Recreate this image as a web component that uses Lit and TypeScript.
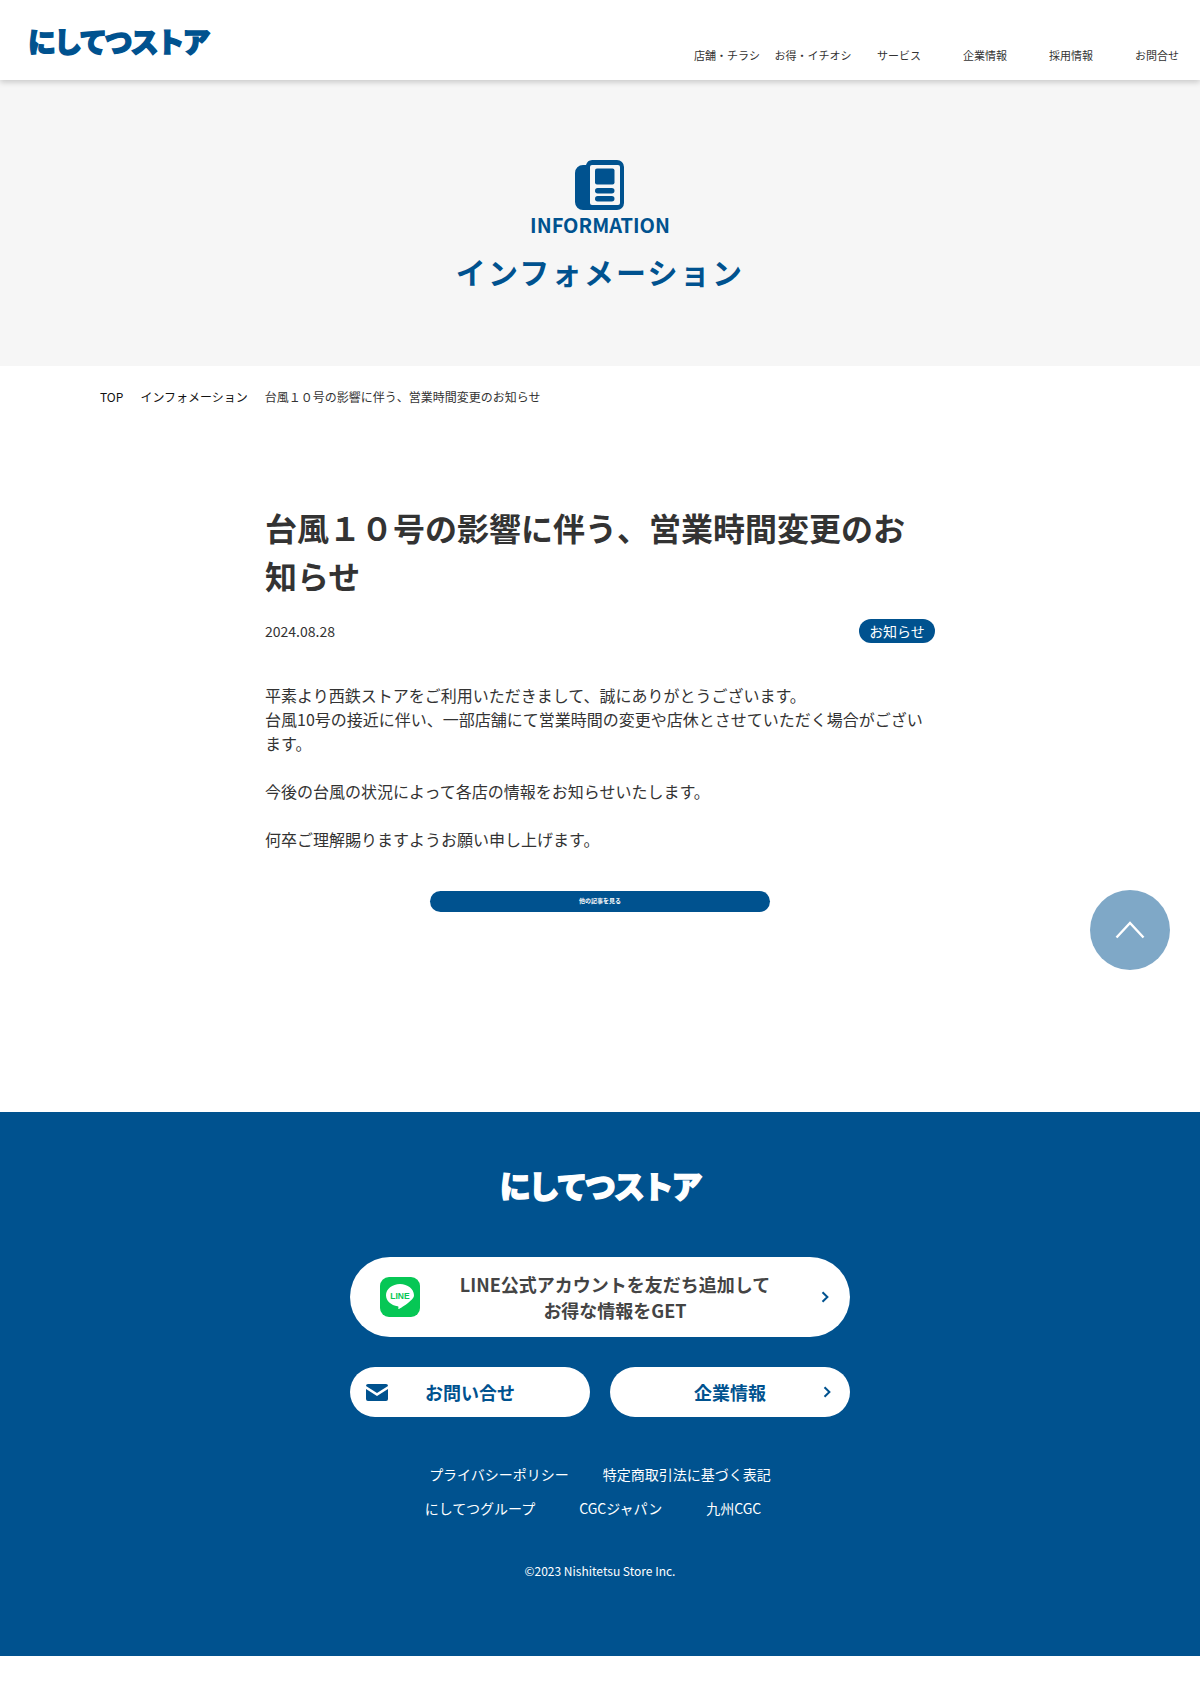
import { LitElement, css, html } from 'lit';
import { customElement } from 'lit/decorators.js';

const NAV = ['店舗・チラシ', 'お得・イチオシ', 'サービス', '企業情報', '採用情報', 'お問合せ'];

const chevron = html`<svg class="chev" width="8" height="12" viewBox="0 0 8 12">
  <path d="M1.5 1.2 6.4 6 1.5 10.8" fill="none" stroke="currentColor" stroke-width="2" />
</svg>`;

@customElement('app-root')
export class AppRoot extends LitElement {
  static styles = css`
    :host {
      display: block;
      position: relative;
      height: 1703px;
      background: #fff;
      color: #333;
      font-family: 'Noto Sans CJK JP', 'Noto Sans', sans-serif;
    }
    a {
      color: inherit;
      text-decoration: none;
    }
    .header {
      position: relative;
      z-index: 1;
      display: flex;
      justify-content: space-between;
      height: 80px;
      padding: 0 0 0 28px;
      background: #fff;
      box-shadow: 0 2px 6px rgba(0, 0, 0, 0.2);
    }
    .logo {
      display: block;
      font-weight: 900;
      white-space: nowrap;
      color: #00528f;
      -webkit-text-stroke: 1.4px currentColor;
    }
    .header .logo {
      font-size: 28px;
      line-height: 28px;
      letter-spacing: -2px;
      margin-top: 27px;
    }
    .nav {
      display: flex;
      align-items: flex-end;
      height: 64px;
    }
    .nav a {
      width: 86px;
      text-align: center;
      font-size: 11px;
      line-height: 18px;
    }
    .hero {
      height: 286px;
      box-sizing: border-box;
      padding-top: 80px;
      background: #f6f6f6;
      color: #00528f;
      text-align: center;
    }
    .hero svg {
      display: block;
      margin: 0 auto;
    }
    .hero-en {
      margin-top: 2px;
      font-size: 20px;
      line-height: 26px;
      font-weight: 700;
    }
    .hero h1 {
      margin: 13px 0 0;
      font-size: 30px;
      line-height: 40px;
      font-weight: 700;
      letter-spacing: 2.2px;
    }
    .crumbs {
      display: flex;
      gap: 17px;
      padding: 22px 0 0 100px;
      font-size: 12px;
      line-height: 18px;
    }
    .crumbs a {
      color: #111;
    }
    .article {
      width: 670px;
      margin: 97px auto 0;
    }
    .article h2 {
      margin: 0;
      font-size: 32px;
      line-height: 48px;
      font-weight: 700;
    }
    .meta {
      display: flex;
      justify-content: space-between;
      align-items: center;
      margin-top: 20px;
      font-size: 14px;
    }
    .tag {
      width: 76px;
      height: 24px;
      border-radius: 12px;
      background: #00528f;
      color: #fff;
      text-align: center;
      line-height: 24px;
    }
    .body {
      margin: 40px 0 0;
      font-size: 16px;
      line-height: 24px;
    }
    .more {
      display: block;
      width: 340px;
      height: 21px;
      margin: 40px auto 0;
      border-radius: 11px;
      background: #00528f;
      color: #fff;
      text-align: center;
      font-size: 6px;
      font-weight: 700;
      line-height: 19px;
    }
    .totop {
      position: absolute;
      left: 1090px;
      top: 890px;
      width: 80px;
      height: 80px;
      border-radius: 50%;
      background: rgba(0, 82, 143, 0.5);
      display: flex;
      align-items: center;
      justify-content: center;
    }
    .footer {
      height: 544px;
      box-sizing: border-box;
      margin-top: 200px;
      padding-top: 58px;
      background: #00528f;
      color: #fff;
      text-align: center;
    }
    .footer .logo {
      color: #fff;
      font-size: 31px;
      line-height: 30px;
      letter-spacing: -2.1px;
    }
    .line {
      display: flex;
      align-items: center;
      width: 500px;
      height: 80px;
      box-sizing: border-box;
      margin: 57px auto 0;
      padding: 0 21px 0 30px;
      border-radius: 40px;
      background: #fff;
      color: #00528f;
    }
    .line-icon text {
      font-family: 'Liberation Sans', sans-serif;
      font-size: 8.5px;
      font-weight: 700;
      fill: #06c755;
    }
    .line-text {
      flex: 1;
      padding-right: 11px;
      color: #444;
      font-size: 18px;
      line-height: 26px;
      font-weight: 600;
    }
    .btns {
      display: flex;
      justify-content: center;
      gap: 20px;
      margin-top: 30px;
    }
    .btn {
      display: grid;
      grid-template-columns: 1fr auto 1fr;
      align-items: center;
      width: 240px;
      height: 50px;
      box-sizing: border-box;
      padding: 0 16px;
      border-radius: 25px;
      background: #fff;
      color: #00528f;
      font-size: 18px;
      font-weight: 700;
    }
    .btn .chev {
      justify-self: end;
      margin-right: 3px;
    }
    .links {
      display: flex;
      justify-content: center;
      font-size: 14px;
      line-height: 24px;
    }
    .links.one {
      gap: 34px;
      margin-top: 45px;
    }
    .links.two {
      gap: 44px;
      margin-top: 10px;
      padding-right: 14px;
    }
    .copy {
      margin-top: 42px;
      font-size: 12px;
      line-height: 18px;
    }
  `;

  render() {
    return html`
      <header class="header">
        <a class="logo">にしてつストア</a>
        <nav class="nav">${NAV.map((n) => html`<a>${n}</a>`)}</nav>
      </header>

      <section class="hero">
        <svg width="50" height="50" viewBox="0 0 50 50">
          <path
            fill="#00528f"
            d="M18 0H42a7 7 0 0 1 7 7V43a7 7 0 0 1-7 7H8a8 8 0 0 1-8-8V13a8 8 0 0 1 8-8h3a7 7 0 0 1 7-5Z"
          />
          <rect x="15" y="5" width="30" height="40" rx="2" fill="#f6f6f6" />
          <rect x="20" y="8.5" width="19.5" height="16" rx="2" fill="#00528f" />
          <rect x="20" y="28" width="19.5" height="5.5" rx="2.7" fill="#00528f" />
          <rect x="20" y="36" width="19.5" height="5.5" rx="2.7" fill="#00528f" />
        </svg>
        <div class="hero-en">INFORMATION</div>
        <h1>インフォメーション</h1>
      </section>

      <div class="crumbs">
        <a>TOP</a>
        <a>インフォメーション</a>
        <span>台風１０号の影響に伴う、営業時間変更のお知らせ</span>
      </div>

      <article class="article">
        <h2>台風１０号の影響に伴う、営業時間変更のお知らせ</h2>
        <div class="meta">
          <span>2024.08.28</span>
          <span class="tag">お知らせ</span>
        </div>
        <p class="body">
          平素より西鉄ストアをご利用いただきまして、誠にありがとうございます。<br />
          台風10号の接近に伴い、一部店舗にて営業時間の変更や店休とさせていただく場合がございます。<br />
          <br />
          今後の台風の状況によって各店の情報をお知らせいたします。<br />
          <br />
          何卒ご理解賜りますようお願い申し上げます。
        </p>
        <a class="more">他の記事を見る</a>
      </article>

      <a class="totop">
        <svg width="30" height="18" viewBox="0 0 30 18">
          <path d="M1.5 16.5 15 2l13.5 14.5" fill="none" stroke="#fff" stroke-width="2.4" />
        </svg>
      </a>

      <footer class="footer">
        <a class="logo">にしてつストア</a>
        <a class="line">
          <svg class="line-icon" width="40" height="40" viewBox="0 0 40 40">
            <rect width="40" height="40" rx="9" fill="#06c755" />
            <path
              fill="#fff"
              d="M20 7c-7.700 0-14 5-14 11.200 0 5.500 5 10.100 11.700 11 .9.200.8.500.7 1.500-.1.700-.3 1.700 1 1.100 1.400-.6 7.600-4.500 10.800-7.700C32.800 21.700 34 20.100 34 18.200 34 12 27.700 7 20 7Z"
            />
            <text x="20" y="21.500" text-anchor="middle">LINE</text>
          </svg>
          <span class="line-text">LINE公式アカウントを友だち追加して<br />お得な情報をGET</span>
          ${chevron}
        </a>
        <div class="btns">
          <a class="btn">
            <svg width="22" height="17" viewBox="0 0 22 17">
              <path fill="#00528f" d="M0 2a2 2 0 0 1 2-2h18a2 2 0 0 1 2 2L11 9 0 2Z" />
              <path fill="#00528f" d="M0 5l11 7 11-7v10a2 2 0 0 1-2 2H2a2 2 0 0 1-2-2V5Z" />
            </svg>
            <span>お問い合せ</span>
            <span></span>
          </a>
          <a class="btn">
            <span></span>
            <span>企業情報</span>
            ${chevron}
          </a>
        </div>
        <div class="links one">
          <a>プライバシーポリシー</a>
          <a>特定商取引法に基づく表記</a>
        </div>
        <div class="links two">
          <a>にしてつグループ</a>
          <a>CGCジャパン</a>
          <a>九州CGC</a>
        </div>
        <div class="copy">©2023 Nishitetsu Store Inc.</div>
      </footer>
    `;
  }
}

declare global {
  interface HTMLElementTagNameMap {
    'app-root': AppRoot;
  }
}
